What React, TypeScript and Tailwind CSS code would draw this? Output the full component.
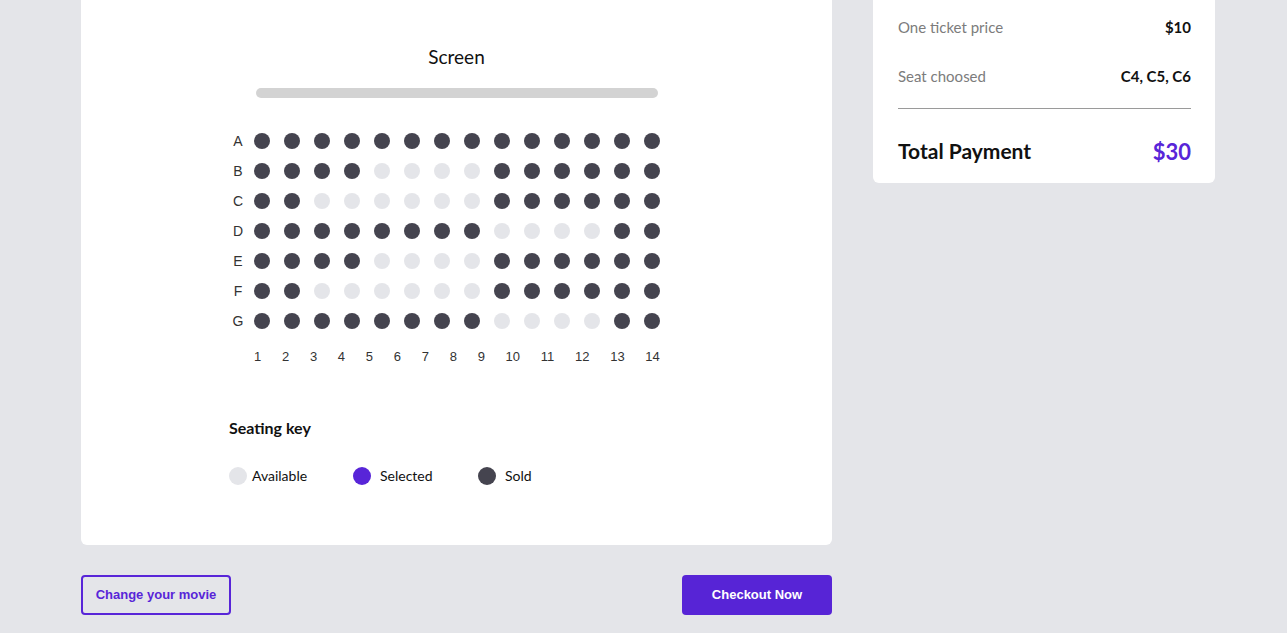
import React from 'react';

// 座席の状態: 0 = available, 1 = sold, 2 = selected
const rows: { label: string; seats: number[] }[] = [
  { label: 'A', seats: [1, 1, 1, 1, 1, 1, 1, 1, 1, 1, 1, 1, 1, 1] },
  { label: 'B', seats: [1, 1, 1, 1, 0, 0, 0, 0, 1, 1, 1, 1, 1, 1] },
  { label: 'C', seats: [1, 1, 0, 0, 0, 0, 0, 0, 1, 1, 1, 1, 1, 1] },
  { label: 'D', seats: [1, 1, 1, 1, 1, 1, 1, 1, 0, 0, 0, 0, 1, 1] },
  { label: 'E', seats: [1, 1, 1, 1, 0, 0, 0, 0, 1, 1, 1, 1, 1, 1] },
  { label: 'F', seats: [1, 1, 0, 0, 0, 0, 0, 0, 1, 1, 1, 1, 1, 1] },
  { label: 'G', seats: [1, 1, 1, 1, 1, 1, 1, 1, 0, 0, 0, 0, 1, 1] },
];

const seatColor = (s: number) =>
  s === 1 ? 'bg-[#45444f]' : s === 2 ? 'bg-[#5825d8]' : 'bg-[#e4e5e9]';

function SeatMap() {
  return (
    <div className="ml-[148px] flex flex-col gap-[14px] pt-[35px]">
      {rows.map((row) => (
        <div key={row.label} className="flex items-center h-4">
          <span className="w-[18px] text-center text-[14px] text-[#333] font-['Liberation_Sans',sans-serif] leading-none">
            {row.label}
          </span>
          <div className="ml-[7px] flex gap-[14px]">
            {row.seats.map((s, i) => (
              <div key={i} className={`w-4 h-4 rounded-full ${seatColor(s)}`} />
            ))}
          </div>
        </div>
      ))}
      <div className="ml-[25px] w-[406px] flex justify-between mt-[7px] text-[13px] text-[#333] font-['Liberation_Sans',sans-serif] leading-none">
        {Array.from({ length: 14 }, (_, i) => (
          <span key={i}>{i + 1}</span>
        ))}
      </div>
    </div>
  );
}

function SeatingKey() {
  const keys = [
    { name: 'Available', color: 'bg-[#e4e5e9]', w: 'w-[124px]' },
    { name: 'Selected', color: 'bg-[#5825d8]', w: 'w-[125px]' },
    { name: 'Sold', color: 'bg-[#45444f]', w: '' },
  ];
  return (
    <div className="ml-[148px] mt-[55px]">
      <h3 className="text-[16px] font-bold text-[#111] leading-5">Seating key</h3>
      <div className="flex items-center mt-[27px]">
        {keys.map((k) => (
          <div key={k.name} className={`flex items-center ${k.w}`}>
            <div className={`w-[18px] h-[18px] rounded-full ${k.color}`} />
            <span className={`text-[14px] text-[#111] ${k.name === 'Available' ? 'ml-[5px]' : 'ml-[9px]'}`}>
              {k.name}
            </span>
          </div>
        ))}
      </div>
    </div>
  );
}

export default function App() {
  return (
    <div className="min-h-[633px] bg-[#e4e5e9] font-['Lato',sans-serif] pl-[81px] flex gap-[41px] items-start">
      <div className="w-[751px] shrink-0">
        <div className="bg-white rounded-b-md h-[545px] pt-[45px]">
          <div className="text-center text-[19px] text-[#111] leading-6">Screen</div>
          <div className="mx-auto mt-[19px] w-[402px] h-[10px] rounded-full bg-[#d3d3d3]" />
          <SeatMap />
          <SeatingKey />
        </div>
        <div className="flex justify-between mt-[30px] font-['Liberation_Sans',sans-serif]">
          <button className="w-[150px] h-10 border-2 border-[#5825d8] rounded-sm text-[13px] font-bold text-[#5825d8]">
            Change your movie
          </button>
          <button className="w-[150px] h-10 bg-[#5724d6] rounded-sm text-[13px] font-bold text-white">
            Checkout Now
          </button>
        </div>
      </div>

      <div className="w-[342px] shrink-0 bg-white rounded-b-md pl-[25px] pr-6 pt-[17px] pb-[18px]">
        <div className="flex justify-between items-center h-5 text-[15px]">
          <span className="text-[#7c7c7c]">One ticket price</span>
          <span className="font-bold text-[#111]">$10</span>
        </div>
        <div className="flex justify-between items-center h-5 mt-[29px] text-[15px]">
          <span className="text-[#7c7c7c]">Seat choosed</span>
          <span className="font-bold text-[#111]">C4, C5, C6</span>
        </div>
        <div className="h-px bg-[#9a9a9a] mt-[22px]" />
        <div className="flex justify-between items-center h-7 mt-[28px]">
          <span className="text-[21px] font-bold text-[#111]">Total Payment</span>
          <span className="text-[22px] font-bold text-[#5825d8]">$30</span>
        </div>
      </div>
    </div>
  );
}
